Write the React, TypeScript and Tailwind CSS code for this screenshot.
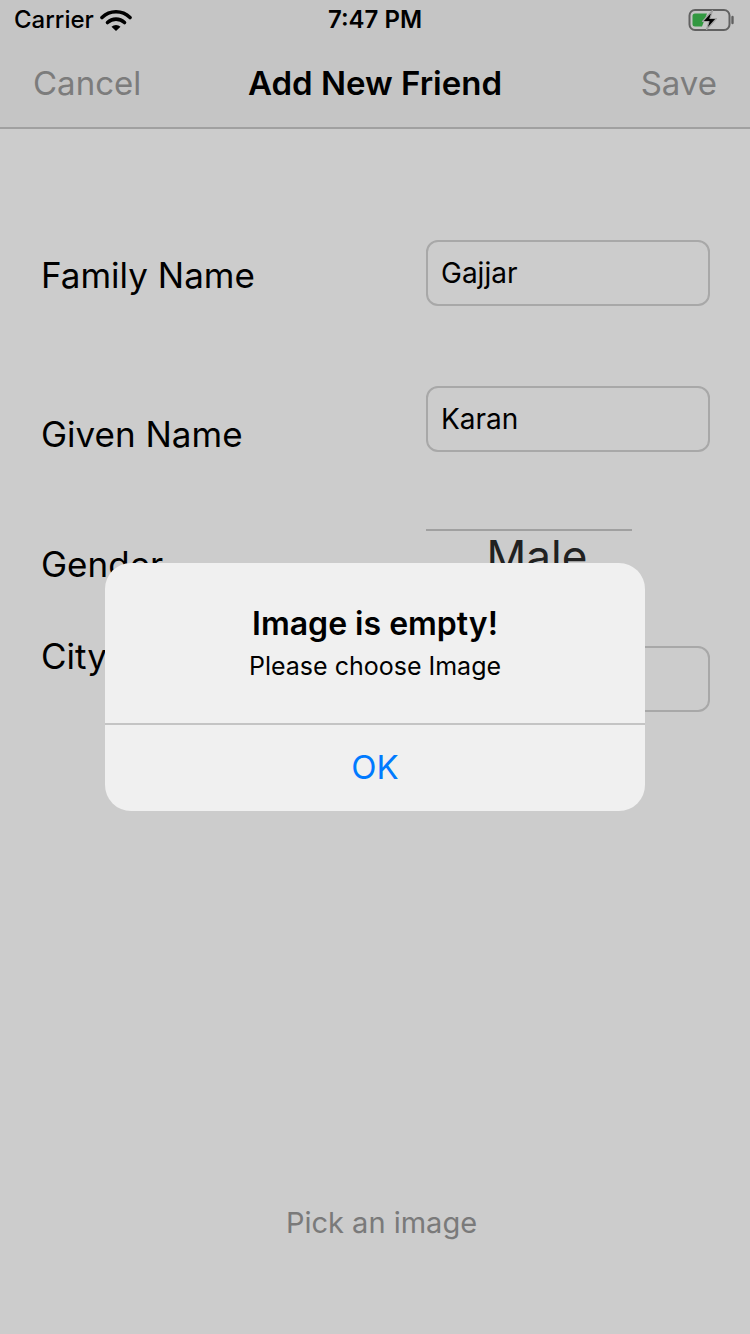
import React from "react";

const SF = { fontFamily: "Inter, 'Noto Sans', sans-serif" };

function Wifi() {
  return (
    <svg width="32" height="24" viewBox="0 0 32 24">
      <path d="M2 9.5 A20 20 0 0 1 30 9.5" fill="none" stroke="#000" strokeWidth="3.6" strokeLinecap="round" />
      <path d="M7.5 14.5 A12.5 12.5 0 0 1 24.5 14.5" fill="none" stroke="#000" strokeWidth="3.6" strokeLinecap="round" />
      <path d="M16 23 L11.5 18.8 A6.5 6.5 0 0 1 20.5 18.8 Z" fill="#000" />
    </svg>
  );
}

function Battery() {
  return (
    <svg width="48" height="24" viewBox="0 0 48 24">
      <rect x="1.5" y="2" width="40" height="20" rx="5.5" fill="none" stroke="#7a7a7a" strokeWidth="2" />
      <path d="M44.5 9 v6" stroke="#7a7a7a" strokeWidth="2.4" strokeLinecap="round" />
      <path d="M7 5.5 h12 l-5 13 h-7 a2.5 2.5 0 0 1 -2.5 -2.5 v-8 a2.5 2.5 0 0 1 2.5 -2.5 z" fill="#3fbf52" />
      <path d="M24.5 2.5 L14.5 13.5 H21 L18.5 21.5 L28.5 10.5 H22 Z" fill="#000" stroke="#cacaca" strokeWidth="1.2" strokeLinejoin="round" />
    </svg>
  );
}

function Field({ value }: { value?: string }) {
  return (
    <div className="flex h-[66px] w-[284px] items-center rounded-[12px] border-2 border-[#d2d2d2] px-[13px] text-[28px] text-black">
      {value}
    </div>
  );
}

export default function App() {
  return (
    <div className="relative h-[1334px] w-[750px] overflow-hidden bg-white text-black" style={SF}>
      {/* status bar */}
      <div className="flex h-[40px] items-center bg-[#f7f7f7] px-[14px]">
        <div className="flex w-[200px] items-center gap-[6px] text-[24px] font-medium">
          Carrier
          <Wifi />
        </div>
        <div className="flex-1 text-center text-[24px] font-semibold">7:47 PM</div>
        <div className="flex w-[200px] justify-end">
          <Battery />
        </div>
      </div>

      {/* nav bar */}
      <div className="flex h-[89px] items-center border-b-2 border-[#c8c8c8] bg-[#f7f7f7] px-[33px]">
        <div className="w-[150px] text-[33px] text-[#9c9c9c]">Cancel</div>
        <div className="flex-1 text-center text-[33px] font-semibold">Add New Friend</div>
        <div className="w-[150px] text-right text-[33px] text-[#9c9c9c]">Save</div>
      </div>

      {/* form */}
      <div className="flex flex-col pl-[41px] pr-[40px]">
        <div className="mt-[111px] flex h-[66px] items-start justify-between">
          <div className="mt-[15px] text-[35px] leading-[40px]">Family Name</div>
          <Field value="Gajjar" />
        </div>
        <div className="mt-[80px] flex h-[66px] items-start justify-between">
          <div className="mt-[28px] text-[35px] leading-[40px]">Given Name</div>
          <Field value="Karan" />
        </div>
        <div className="mt-[77px] flex h-[117px] items-start justify-between">
          <div className="mt-[15px] text-[35px] leading-[40px]">Gender</div>
          <div className="mr-[78px] flex w-[206px] flex-col items-center border-t-2 border-[#c8c8c8]">
            <div className="ml-[16px] text-[44px] leading-[50px] text-[#2a2a2a]">Male</div>
          </div>
        </div>
        <div className="flex h-[66px] items-start justify-between">
          <div className="mt-[-10px] text-[35px] leading-[40px]">City</div>
          <Field />
        </div>
        <div className="mt-[491px] text-center text-[29px] leading-[40px] text-[#999999]" style={{ marginRight: -12 }}>
          Pick an image
        </div>
      </div>

      {/* dim overlay + alert */}
      <div className="absolute inset-0 flex justify-center bg-black/20 pt-[563px]">
        <div className="flex h-[248px] w-[540px] flex-col rounded-[26px] bg-[#f0f0f0]">
          <div className="flex h-[160px] flex-col items-center pt-[41px]">
            <div className="text-[32px] font-semibold leading-[40px]">Image is empty!</div>
            <div className="mt-[6px] text-[25px] leading-[32px]">Please choose Image</div>
          </div>
          <div className="h-[2px] bg-[#c4c4c4]" />
          <div className="flex flex-1 items-center justify-center text-[33px] text-[#007aff]">OK</div>
        </div>
      </div>
    </div>
  );
}
